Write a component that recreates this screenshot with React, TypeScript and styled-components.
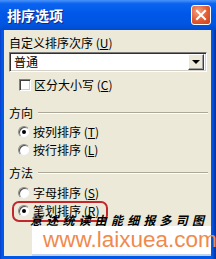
import styled, { createGlobalStyle } from "styled-components";

const GlobalStyle = createGlobalStyle`
  html, body {
    margin: 0;
    padding: 0;
    background: #ffffff;
  }
  body {
    font-family: "Noto Sans CJK SC", "Liberation Sans", sans-serif;
  }
`;

const Window = styled.div`
  position: relative;
  width: 216px;
  height: 259px;
  overflow: hidden;
  display: flex;
  flex-direction: column;
  background: linear-gradient(90deg, #0a3fc8 0px, #0058e8 2px, #0058e8 212px, #0a2f9c 216px);
`;

const TitleBar = styled.div`
  height: 30px;
  flex: none;
  display: flex;
  align-items: center;
  justify-content: space-between;
  padding: 0 5px 0 7px;
  background: linear-gradient(#4a94fa 0%, #0b64f0 12%, #0058e8 45%, #0055e2 80%, #004bcc 100%);
`;

const Title = styled.span`
  color: #ffffff;
  font-weight: 700;
  font-size: 14px;
  line-height: 16px;
  text-shadow: 1px 1px #0a2a90;
`;

const CloseButton = styled.div`
  width: 18px;
  height: 18px;
  border: 1px solid #ffffff;
  border-radius: 3px;
  background: radial-gradient(circle at 35% 30%, #f4a283, #e15a30 55%, #c8421d);
  display: flex;
  align-items: center;
  justify-content: center;
`;

const Client = styled.div`
  flex: 1;
  margin: 0 5px 3px 4px;
  padding: 6px 0 0 5px;
  background: #ece9d8;
  font-size: 12px;
  line-height: 14px;
  color: #000000;
`;

const Label = styled.div`
  height: 14px;
  white-space: nowrap;
`;

const Combo = styled.div`
  margin-top: 2px;
  width: 198px;
  height: 20px;
  box-sizing: border-box;
  display: flex;
  align-items: center;
  background: #ffffff;
  border-top: 1px solid #7a7a7a;
  border-left: 1px solid #7a7a7a;
  border-right: 1px solid #ffffff;
  border-bottom: 1px solid #ffffff;
  box-shadow: inset 1px 1px #303030, inset -1px -1px #d4d0c8;
  padding: 2px 2px 2px 4px;
`;

const ComboText = styled.span`
  flex: 1;
`;

const DropButton = styled.div`
  width: 16px;
  height: 16px;
  box-sizing: border-box;
  background: #ece9d8;
  border-top: 1px solid #ffffff;
  border-left: 1px solid #ffffff;
  border-right: 1px solid #404040;
  border-bottom: 1px solid #404040;
  box-shadow: inset -1px -1px #a0a0a0;
  display: flex;
  align-items: center;
  justify-content: center;
`;

const Arrow = styled.div`
  width: 0;
  height: 0;
  border-left: 4px solid transparent;
  border-right: 4px solid transparent;
  border-top: 4px solid #000000;
`;

const OptionRow = styled.div<{ $gap: number }>`
  display: flex;
  align-items: center;
  height: 14px;
  margin-top: ${(p) => p.$gap}px;
  padding-left: 9px;
  gap: 3px;
  white-space: nowrap;
`;

const CheckBox = styled.div`
  width: 12px;
  height: 12px;
  box-sizing: border-box;
  background: #ffffff;
  border-top: 1px solid #808080;
  border-left: 1px solid #808080;
  border-right: 1px solid #ffffff;
  border-bottom: 1px solid #ffffff;
  box-shadow: inset 1px 1px #404040, inset -1px -1px #d4d0c8;
  margin-left: 1px;
`;

const Radio = styled.div<{ $checked?: boolean }>`
  width: 12px;
  height: 12px;
  box-sizing: border-box;
  border-radius: 50%;
  background: #ffffff;
  border: 1px solid #8c8c8c;
  border-bottom-color: #e8e8e8;
  border-right-color: #e8e8e8;
  box-shadow: inset 1px 1px #505050;
  display: flex;
  align-items: center;
  justify-content: center;
  &::after {
    content: "";
    width: 4px;
    height: 4px;
    border-radius: 50%;
    background: ${(p) => (p.$checked ? "#000000" : "transparent")};
  }
`;

const GroupHeader = styled.div<{ $gap: number }>`
  display: flex;
  align-items: center;
  gap: 5px;
  height: 14px;
  margin-top: ${(p) => p.$gap}px;
  margin-right: 3px;
`;

const GroupLine = styled.div`
  flex: 1;
  height: 0;
  border-top: 1px solid #aca899;
  border-bottom: 1px solid #ffffff;
`;

const Highlight = styled.div`
  position: absolute;
  left: 12px;
  top: 201px;
  width: 92px;
  height: 17px;
  border: 2px solid #c4262d;
  border-radius: 7px;
`;

const Scribble = styled.div`
  position: absolute;
  left: 30px;
  top: 213px;
  font-size: 12px;
  line-height: 13px;
  font-weight: 700;
  letter-spacing: 4.2px;
  font-style: italic;
  color: #000000;
  white-space: nowrap;
`;

const Banner = styled.div`
  position: absolute;
  left: 32px;
  top: 226px;
  width: 168px;
  height: 28px;
  background: #ffffff;
  border-bottom: 2px solid #c3d3ef;
  padding-left: 11px;
`;

const BannerText = styled.span`
  font-family: "Liberation Sans", Arial, sans-serif;
  font-size: 22.5px;
  line-height: 28px;
  color: #f08a4c;
  white-space: nowrap;
`;

export default function App() {
  return (
    <>
      <GlobalStyle />
      <Window>
        <TitleBar>
          <Title>排序选项</Title>
          <CloseButton>
            <svg width="12" height="12" viewBox="0 0 12 12">
              <path d="M2 2 L10 10 M10 2 L2 10" stroke="#ffffff" strokeWidth="2" strokeLinecap="square" />
            </svg>
          </CloseButton>
        </TitleBar>
        <Client>
          <Label>
            自定义排序次序 (<u>U</u>)
          </Label>
          <Combo>
            <ComboText>普通</ComboText>
            <DropButton>
              <Arrow />
            </DropButton>
          </Combo>
          <OptionRow $gap={6}>
            <CheckBox />
            <span>
              区分大小写 (<u>C</u>)
            </span>
          </OptionRow>
          <GroupHeader $gap={14}>
            <span>方向</span>
            <GroupLine />
          </GroupHeader>
          <OptionRow $gap={5}>
            <Radio $checked />
            <span>
              按列排序 (<u>T</u>)
            </span>
          </OptionRow>
          <OptionRow $gap={4}>
            <Radio />
            <span>
              按行排序 (<u>L</u>)
            </span>
          </OptionRow>
          <GroupHeader $gap={9}>
            <span>方法</span>
            <GroupLine />
          </GroupHeader>
          <OptionRow $gap={6}>
            <Radio />
            <span>
              字母排序 (<u>S</u>)
            </span>
          </OptionRow>
          <OptionRow $gap={4}>
            <Radio $checked />
            <span>
              笔划排序 (<u>R</u>)
            </span>
          </OptionRow>
        </Client>
        <Highlight />
        <Scribble>意述统读由能细报多司图</Scribble>
        <Banner>
          <BannerText>www.laixuea.com</BannerText>
        </Banner>
      </Window>
    </>
  );
}
